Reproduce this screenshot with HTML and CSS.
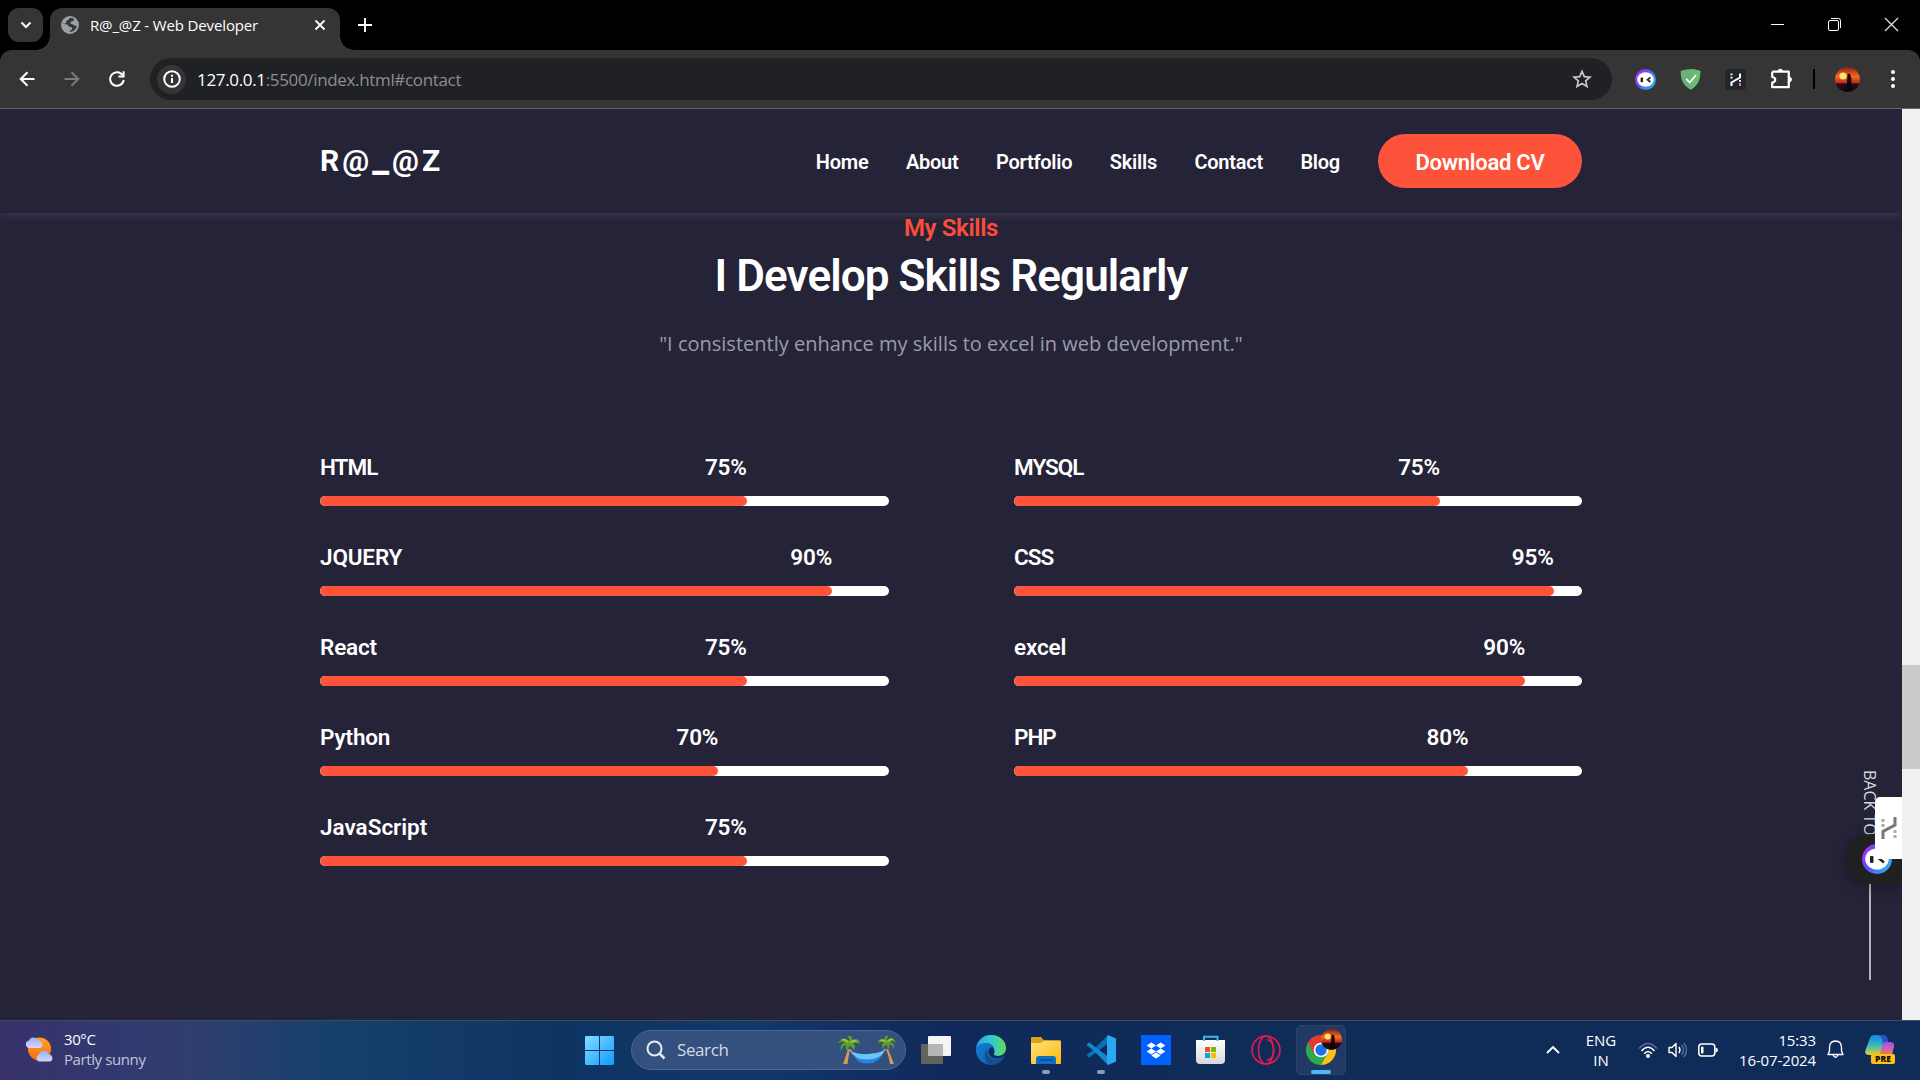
FILE: index.html
```html
<!DOCTYPE html>
<html lang="en">
<head>
<meta charset="utf-8">
<title>R@_@Z - Web Developer</title>
<link rel="stylesheet" href="styles.css">
</head>
<body>
<div class="tabstrip">
  <div class="tab-search"><svg width="12" height="8" viewBox="0 0 12 8"><path d="M1.500 1.500 6 6l4.500-4.500" fill="none" stroke="#fff" stroke-width="2"/></svg></div>
  <div class="tab">
    <svg class="favicon" width="18" height="18" viewBox="0 0 18 18"><circle cx="9" cy="9" r="9" fill="#9aa0a6"/><path d="M9 2c-1 1-1.500 2-3 2.500S6 7 4.500 7.500 2 7 1.800 8c2 .3 4.200 0 5.200 1s.5 2 2 2 2.500.5 2 2-2.500 1.500-2.500 3c4 0 7-3 7.300-6.500-1 .8-2.300.5-3-.5s-2.300-.5-3-1.500.2-2 1.500-2.200 1.700-.8 1.500-2S11 1.800 9 2z" fill="#35363a"/></svg>
    <span class="tab-title">R@_@Z - Web Developer</span>
    <svg class="tab-close" width="12" height="12" viewBox="0 0 12 12"><path d="m1.500 1.500 9 9m0-9-9 9" stroke="#fff" stroke-width="1.800"/></svg>
  </div>
  <svg class="tab-new" width="14" height="14" viewBox="0 0 14 14"><path d="M7 0v14M0 7h14" stroke="#fff" stroke-width="1.900"/></svg>
  <div class="win-controls">
    <svg width="15" height="15" viewBox="0 0 15 15"><path d="M1 7.500h13" stroke="#fff"/></svg>
    <svg width="15" height="15" viewBox="0 0 15 15"><rect x="1.500" y="3.500" width="10" height="10" rx="1.500" fill="none" stroke="#fff"/><path d="M4 1.500h7.500a2 2 0 0 1 2 2V11" fill="none" stroke="#fff"/></svg>
    <svg width="15" height="15" viewBox="0 0 15 15"><path d="m1 1 13 13M14 1 1 14" stroke="#e6e6e6" stroke-width="1.200"/></svg>
  </div>
</div>
<div class="toolbar">
  <div class="nav-btn"><svg width="16" height="16" viewBox="0 0 16 16"><path d="M15.500 8H2M8.500 1.200 1.700 8l6.800 6.800" fill="none" stroke="#fff" stroke-width="2"/></svg></div>
  <div class="nav-btn"><svg width="16" height="16" viewBox="0 0 16 16"><path d="M.5 8H14M7.500 1.200 14.300 8l-6.800 6.800" fill="none" stroke="#7b7b7b" stroke-width="2"/></svg></div>
  <div class="nav-btn"><svg width="16" height="16" viewBox="0 0 16 16"><path d="M13.600 4.200A6.800 6.800 0 1 0 14.700 9" fill="none" stroke="#fff" stroke-width="2"/><path d="M15.600.3v6.200H9.400V4.600h4.200V.3z" fill="#fff"/></svg></div>
  <div class="omnibox">
    <span class="info"><svg width="18" height="18" viewBox="0 0 18 18"><circle cx="9" cy="9" r="7.800" fill="none" stroke="#fff" stroke-width="2"/><path d="M9 8v5M9 4.800v1.900" stroke="#fff" stroke-width="2"/></svg></span>
    <span class="url"><b>127.0.0.1</b>:5500/index.html#contact</span>
    <svg class="star" width="20" height="20" viewBox="0 0 20 20"><path d="m10 2.300 2.300 5.300 5.700.5-4.300 3.800 1.300 5.600-5-3-5 3 1.300-5.600L2 8.100l5.700-.5z" fill="none" stroke="#c7c7c7" stroke-width="1.700"/></svg>
  </div>
  <div class="extensions">
    <span class="ext"><svg width="21" height="21" viewBox="0 0 30 30"><use href="#bot"/></svg></span>
    <span class="ext"><svg width="21" height="21" viewBox="0 0 21 21"><path d="M10.500.3c3.500 0 7 .5 9.800 1.700 0 6.500-.8 13.500-9.800 18.700C1.500 15.500.7 8.500.7 2 3.500.8 7 .3 10.500.3z" fill="#67b279"/><path d="M10.500.3c3.500 0 7 .5 9.800 1.700 0 6.500-.8 13.500-9.800 18.700z" fill="#68bc71"/><path d="m6.200 9.800 3.500 3.700 6.500-7.500" fill="none" stroke="#fff" stroke-width="1.800"/></svg></span>
    <span class="ext"><svg width="21" height="21" viewBox="0 0 21 21"><rect width="21" height="21" rx="3.500" fill="#20262b"/><path d="M6.500 17v-3.500l8.500-5V4.500" fill="none" stroke="#fff" stroke-width="2"/><path d="M6.500 4.500v6M15 11v3" stroke="#fff" stroke-width="2" stroke-dasharray="1.800 1.500"/><path d="M15 14v3" stroke="#f06a9b" stroke-width="2"/></svg></span>
    <span class="ext"><svg width="22" height="22" viewBox="0 0 22 22"><path d="M2.200 3.700h16.600v5.500M18.800 13.500v5.700H2.200v-4.700c4-.7 4-5 0-5.500V3.700" fill="none" stroke="#fff" stroke-width="2.200" stroke-linejoin="round"/><path d="M18.800 8v7" stroke="#fff" stroke-width="2.200"/><path d="M8 3.500a2.300 2.300 0 0 1 4.600 0zM19.200 9.200a2.300 2.300 0 0 1 0 4.600z" fill="#fff" stroke="#fff"/></svg></span>
    <i class="divider"></i>
    <span class="ext"><svg width="25" height="25" viewBox="0 0 25 25"><use href="#sunset"/></svg></span>
    <span class="ext"><svg width="6" height="20" viewBox="0 0 6 20"><g fill="#fff"><circle cx="3" cy="3" r="2"/><circle cx="3" cy="10" r="2"/><circle cx="3" cy="17" r="2"/></g></svg></span>
  </div>
</div>

<div class="viewport">
  <div class="page">
    <header class="site-header">
      <div class="container header-row">
        <span class="logo">R@<span class="dash">_</span>@Z</span>
        <nav class="menu">
          <a>Home</a><a>About</a><a>Portfolio</a><a>Skills</a><a>Contact</a><a>Blog</a>
        </nav>
        <a class="cv-button">Download CV</a>
      </div>
    </header>
    <main class="skills">
      <p class="eyebrow">My Skills</p>
      <h1 class="title">I Develop Skills Regularly</h1>
      <p class="lead">"I consistently enhance my skills to excel in web development."</p>
      <div class="container skill-columns">
        <div class="skill-column">
          <div class="skill"><div class="skill-head" style="width:75%"><span class="caps">HTML</span><span>75%</span></div><div class="bar"><i style="width:75%"></i></div></div>
          <div class="skill"><div class="skill-head" style="width:90%"><span>JQUERY</span><span>90%</span></div><div class="bar"><i style="width:90%"></i></div></div>
          <div class="skill"><div class="skill-head" style="width:75%"><span>React</span><span>75%</span></div><div class="bar"><i style="width:75%"></i></div></div>
          <div class="skill"><div class="skill-head" style="width:70%"><span>Python</span><span>70%</span></div><div class="bar"><i style="width:70%"></i></div></div>
          <div class="skill"><div class="skill-head" style="width:75%"><span class="wide">JavaScript</span><span>75%</span></div><div class="bar"><i style="width:75%"></i></div></div>
        </div>
        <div class="skill-column narrow">
          <div class="skill"><div class="skill-head" style="width:75%"><span class="caps">MYSQL</span><span>75%</span></div><div class="bar"><i style="width:75%"></i></div></div>
          <div class="skill"><div class="skill-head" style="width:95%"><span class="caps">CSS</span><span>95%</span></div><div class="bar"><i style="width:95%"></i></div></div>
          <div class="skill"><div class="skill-head" style="width:90%"><span>excel</span><span>90%</span></div><div class="bar"><i style="width:90%"></i></div></div>
          <div class="skill"><div class="skill-head" style="width:80%"><span class="caps">PHP</span><span>80%</span></div><div class="bar"><i style="width:80%"></i></div></div>
        </div>
      </div>
    </main>
    <div class="back-top"><span>BACK TO TOP</span><i></i></div>
    <div class="bot-pill"><svg width="30" height="30" viewBox="0 0 30 30"><use href="#bot"/></svg></div>
    <div class="side-widget"><svg width="16" height="22" viewBox="0 0 16 22"><path d="M2 22v-7.500L14 8V0" fill="none" stroke="#777" stroke-width="3"/><path d="M2 2v9M14 13v9" stroke="#aaa" stroke-width="3" stroke-dasharray="3 2"/></svg></div>
  </div>
  <div class="scrollbar"><i></i></div>
</div>

<div class="taskbar">
  <div class="weather">
    <svg width="28" height="26" viewBox="0 0 28 26"><defs><linearGradient id="sun" x2="0" y2="1"><stop stop-color="#ffa51f"/><stop offset="1" stop-color="#f8691a"/></linearGradient><linearGradient id="cloud" x2="0" y2="1"><stop stop-color="#93b4f5"/><stop offset="1" stop-color="#d9d3fb"/></linearGradient></defs><circle cx="14.500" cy="13" r="11.500" fill="url(#sun)"/><path d="M4 12a3.800 3.800 0 0 1 0-7.500 4.500 4.500 0 0 1 8.500 0c1 0 2 0 3 .8 3.500 2 2 6.700-1 6.700z" fill="url(#cloud)"/><path d="M14 25.500a3.700 3.700 0 0 1 0-7 5 5 0 0 1 9.500-.5c5 .5 5.200 7.500 1 7.500z" fill="url(#cloud)"/></svg>
    <div class="weather-text"><span>30°C</span><span class="dim">Partly sunny</span></div>
  </div>
  <div class="task-icons">
    <svg class="start" width="29" height="29" viewBox="0 0 29 29"><defs><linearGradient id="win" gradientUnits="userSpaceOnUse" x1="0" y1="0" x2="29" y2="29"><stop stop-color="#84dcff"/><stop offset="1" stop-color="#0d9bff"/></linearGradient></defs><path d="M1 0h13v14H0V1zM15 0h13l1 1v13H15zM0 15h14v14H1l-1-1zM15 15h14v13l-1 1H15z" fill="url(#win)"/></svg>
    <div class="search">
      <svg width="20" height="20" viewBox="0 0 20 20"><circle cx="8.500" cy="8.500" r="7" fill="none" stroke="#e8eaf0" stroke-width="2"/><path d="m13.500 13.500 5 5" stroke="#e8eaf0" stroke-width="2.500"/></svg>
      <span>Search</span>
      <svg class="palms" width="58" height="30" viewBox="0 0 58 30"><path d="M14 17q15 5 32-1-4 12-16 12.500T14 17z" fill="#2186ea"/><path d="M14 17q15 5 32-1-3 8-16 8.500T14 17z" fill="#6cc4f8"/><path d="m12 14 5 6M12 15l3 5M48 14l-5 6M47 14l-6 5" stroke="#a9bfd4" stroke-width=".8"/><path d="M5 29q3-8 5-15l2 .5Q10.500 22 9.500 29z" fill="#d99655"/><path d="M56 29q-3-8-6-15l-2 .5q3 7 4 14.500z" fill="#d99655"/><g id="palm"><path d="M11 6Q5 0 0 8q5-2 7-.5Q1 9 3 16q1-5 5-6-1 4 2 7 .5-4 1-6 4 1 5 5 2-6-1-8 4-1 7 1-1-7-8-4Q15 0 9 1q3 2 2 5z" fill="#5c9f27"/><path d="M11 7Q7 2 3 5q4 0 7 3zM12 7q4-4 8 0-4-1-8 1z" fill="#a4cf3b"/></g><g transform="matrix(-.82 0 0 .9 58 0)"><use href="#palm"/></g></svg>
    </div>
    <div class="app"><svg width="30" height="30" viewBox="0 0 30 30"><rect y="9" width="22" height="20" rx="1" fill="#62625f"/><rect x="7" y="1" width="23" height="20" rx="1" fill="#f4f4f4"/><path d="M7 9h15v12H7z" fill="#b5b5b5"/></svg></div>
    <div class="app"><svg width="30" height="30" viewBox="0 0 30 30"><defs><linearGradient id="e1" x1="0" x2="1"><stop stop-color="#25a9e5"/><stop offset=".55" stop-color="#35c8cf"/><stop offset="1" stop-color="#63dd4e"/></linearGradient><linearGradient id="e2" x2="1" y2="1"><stop stop-color="#1583dd"/><stop offset="1" stop-color="#0a5aa8"/></linearGradient></defs><circle cx="15" cy="15" r="15" fill="url(#e2)"/><path d="M0 14C1 6 7 0 15 0c9 0 15 6 15 13 0 5-4 8-8 8-3 0-5-1-4-2.500C20 13 16 8 10 8 5 8 1 10 0 14z" fill="url(#e1)"/><path d="M12 13c-3 9 5 15 16 9-3 5-7 8-12 8-7-1-10-11-4-17z" fill="#154d91"/><path d="M16 12c-3 1-4 4-3 7s5 5 10 4c3-.5 5-1.500 7-3v-4c-2 4-5 5-8 5-3 0-5-1-4-2.500 1-2 0-5-2-6.500z" fill="#0f2c58"/></svg></div>
    <div class="app running"><svg width="30" height="30" viewBox="0 0 30 30"><defs><linearGradient id="fold" x2="1" y2="1"><stop stop-color="#ffe07a"/><stop offset="1" stop-color="#ffb911"/></linearGradient></defs><path d="M0 3q0-1 1-1h9l3 3.500h16V12H0z" fill="#dfa01a"/><path d="M0 8h10l3-2.500h16q1 0 1 1V28q0 1-1 1H1q-1 0-1-1z" fill="url(#fold)"/><path d="M5 29v-5q0-3 3-3h14q3 0 3 3v5z" fill="#0f70c0"/><path d="M9 25h12" stroke="#064a8c" stroke-width="1.500" stroke-linecap="round"/></svg></div>
    <div class="app running"><svg width="30" height="30" viewBox="0 0 30 30"><path d="M22 0 7.500 14.500 3 18 .5 20l2 2.500L4 22 22 8.500z" fill="#0a6fb5"/><path d="M22 30 7.500 15.500 3 12 .5 10l2-2.500L4 8l18 13.500z" fill="#1487cf"/><path d="M22 0q-1 1-1 3v24q0 2 1 3l8-3.500v-23z" fill="#29a9f2"/></svg></div>
    <div class="app"><svg width="30" height="30" viewBox="0 0 30 30"><path d="M0 0h30v30H0z" fill="#0061fe"/><path d="m10.300 7.500 4.700 3-4.700 3-4.700-3zM19.700 7.500l4.700 3-4.700 3-4.700-3zM10.300 13.500l4.700 3-4.700 3-4.700-3zM19.700 13.500l4.700 3-4.700 3-4.700-3zM15 17.500l4.700 3-4.700 3-4.700-3z" fill="#fff"/></svg></div>
    <div class="app"><svg width="30" height="30" viewBox="0 0 30 30"><defs><linearGradient id="bag" x2="0" y2="1"><stop stop-color="#fff"/><stop offset="1" stop-color="#d8d8d8"/></linearGradient></defs><path d="M0 5h29v20q0 4-4 4H4q-4 0-4-4z" fill="url(#bag)"/><path d="M8 6V1.800h13.500V6" fill="none" stroke="#35b7f1" stroke-width="2"/><path d="M9 12h5v5H9z" fill="#f25022"/><path d="M15 12h5v5h-5z" fill="#7fba00"/><path d="M9 18h5v5H9z" fill="#00a4ef"/><path d="M15 18h5v5h-5z" fill="#ffb900"/></svg></div>
    <div class="app"><svg width="30" height="30" viewBox="0 0 30 30"><g fill="none" stroke="#e51a4b" stroke-width="1.600"><circle cx="15" cy="15" r="14"/><ellipse cx="15" cy="15" rx="7.500" ry="14"/><path d="M16 4.500c9 2 9 19 0 21"/></g></svg></div>
    <div class="app active"><svg width="30" height="30" viewBox="0 0 30 30"><path d="M15 15 28 7.500A15 15 0 0 1 15 30z" fill="#fbc116"/><path d="M15 0 2 7.500A15 15 0 0 0 15 30l6.500-11.500z" fill="#2da94f"/><path d="M15 15 8 18.500 2 7.500A15 15 0 0 1 28 7.500H15z" fill="#e33b2e"/><circle cx="15" cy="15" r="7.300" fill="#fff"/><circle cx="15" cy="15" r="5.700" fill="#1a73e8"/></svg><svg class="badge" width="21" height="21" viewBox="0 0 25 25"><use href="#sunset"/></svg></div>
  </div>
  <div class="tray">
    <svg class="caret" width="14" height="9" viewBox="0 0 14 9"><path d="m1 8 6-6 6 6" fill="none" stroke="#fff" stroke-width="1.900"/></svg>
    <div class="lang"><span>ENG</span><span>IN</span></div>
    <div class="status">
    <svg width="20" height="16" viewBox="0 0 20 16"><g fill="none" stroke="#fff" stroke-width="1.600"><path d="M1 6.500q9-10 18 0" stroke="#56709a"/><path d="M3.500 9q6.500-7.500 13 0M6.200 11.800q3.800-4.500 7.600 0"/></g><circle cx="10" cy="14" r="2" fill="#fff"/></svg>
    <svg width="20" height="16" viewBox="0 0 20 16"><path d="M1 5.500h3L8 1.500v13l-4-4H1z" fill="none" stroke="#fff" stroke-width="1.400" stroke-linejoin="round"/><path d="M11 5q2 3 0 6" fill="none" stroke="#fff" stroke-width="1.400"/><path d="M13.500 3q4 5 0 10M16 1q5 7 0 14" fill="none" stroke="#56709a" stroke-width="1.400"/></svg>
    <svg width="20" height="14" viewBox="0 0 20 14"><rect x=".8" y="1" width="16" height="12" rx="3" fill="none" stroke="#fff" stroke-width="1.500"/><path d="M17.500 4.500q2.500.5 2.500 2.500t-2.500 2.500z" fill="#fff"/><rect x="3" y="3.500" width="2.500" height="7" rx="1" fill="#fff"/></svg>
    </div>
    <div class="clock"><span>15:33</span><span>16-07-2024</span></div>
    <svg class="bell" width="17" height="19" viewBox="0 0 17 19"><path d="M8.500 1q6 .2 6 6.500v3.500l1.500 3.500H1L2.500 11V7.500q0-6.300 6-6.500zM6 15q2.500 4.500 5 0" fill="none" stroke="#fff" stroke-width="1.400" stroke-linejoin="round"/></svg>
    <div class="copilot"><svg width="30" height="29" viewBox="0 0 30 29"><defs><linearGradient id="c1" x2="0" y2="1"><stop stop-color="#1f7fe6"/><stop offset=".45" stop-color="#2ab6c4"/><stop offset="1" stop-color="#e8cf2b"/></linearGradient><linearGradient id="c2" x2="0" y2="1"><stop stop-color="#a24cf0"/><stop offset="1" stop-color="#f57a62"/></linearGradient></defs><path d="M9 0h9q3 0 4 3l1 4q-4 0-5 4l-2 6q-1 3-4 3H4q-5 0-3.500-5L5 3q1-3 4-3z" fill="url(#c1)"/><path d="M18 0q3 0 4 3l1 4q-4 0-5 4l-1-7q-1-3-4-4z" fill="#2155c9"/><path d="M20 7h5q5 0 4 5l-2 8H13q2-1 2.500-3l2-7q1-3 2.500-3z" fill="url(#c2)"/></svg><span>PRE</span></div>
  </div>
</div>
<svg class="symbols" width="0" height="0">
  <defs>
    <linearGradient id="ring" x1="0" y1=".2" x2="1" y2=".8"><stop stop-color="#b02cf0"/><stop offset=".4" stop-color="#5b50ff"/><stop offset="1" stop-color="#23b8e8"/></linearGradient>
    <linearGradient id="sky" x2="0" y2="1"><stop stop-color="#8a1d1c"/><stop offset=".38" stop-color="#fb6a1c"/><stop offset=".62" stop-color="#c22c1a"/><stop offset=".68" stop-color="#2a0c18"/><stop offset="1" stop-color="#0c0612"/></linearGradient>
    <g id="bot"><circle cx="15" cy="15" r="15" fill="url(#ring)"/><ellipse cx="15" cy="15" rx="11.800" ry="10.500" fill="#fff"/><rect x="8" y="12" width="3.500" height="7" rx="1" fill="#222"/><path d="m22 12-4 3.300 4 3.200" fill="none" stroke="#222" stroke-width="2.500"/></g>
    <g id="sunset"><circle cx="12.500" cy="12.500" r="12.500" fill="url(#sky)"/><circle cx="8" cy="9" r="3.600" fill="#ffe66b"/><path d="M12.500 8q1.500-3 3 0l1 5-1 11h-5l1.500-8z" fill="#0c0509"/></g>
  </defs>
</svg>
</body>
</html>
```
FILE: styles.css
```css
* { box-sizing: border-box; }
body {
  margin: 0;
  width: 1920px;
  height: 1080px;
  overflow: hidden;
  display: flex;
  flex-direction: column;
  background: #000;
  color: #fff;
  font-family: "Open Sans", "Noto Sans", sans-serif;
}
svg { display: block; flex: none; }
.symbols { position: absolute; }

/* Browser tab strip */
.tabstrip { height: 50px; display: flex; align-items: flex-start; padding-left: 8px; flex: none; }
.tab-search { width: 35px; height: 34px; margin: 8px 7px 0 0; border-radius: 11px; background: #353535; display: grid; place-items: center; }
.tab { position: relative; width: 290px; height: 42px; margin-top: 8px; padding: 0 14px 8px 11px; border-radius: 12px 12px 0 0; background: #353535; display: flex; align-items: center; }
.tab::before, .tab::after { content: ""; position: absolute; bottom: 0; width: 14px; height: 14px; }
.tab::before { left: -14px; background: radial-gradient(circle at 0 0, transparent 13.5px, #353535 14px); }
.tab::after { right: -14px; background: radial-gradient(circle at 100% 0, transparent 13.5px, #353535 14px); }
.tab-title { margin-left: 11px; font-size: 15px; letter-spacing: -.14px; white-space: nowrap; }
.tab-close { margin-left: auto; }
.tab-new { margin: 18px 0 0 18px; }
.win-controls { margin: 17px 21px 0 auto; display: flex; gap: 42px; }

/* Browser toolbar */
.toolbar { height: 59px; flex: none; display: flex; align-items: center; padding: 0 5px; background: #353535; border-bottom: 1px solid #66655f; border-radius: 12px 12px 0 0; }
.nav-btn { width: 45px; padding-right: 1px; display: flex; justify-content: center; }
.omnibox { width: 1462px; height: 42px; margin-left: 10px; padding: 0 20px 0 7px; border-radius: 21px; background: #202124; display: flex; align-items: center; }
.info { width: 29px; height: 29px; border-radius: 50%; background: #353535; display: grid; place-items: center; }
.url { margin-left: 11px; font-size: 17px; letter-spacing: -.34px; color: #8d8f92; white-space: nowrap; }
.url b { font-weight: 400; color: #fff; }
.star { margin-left: auto; }
.extensions { display: flex; align-items: center; margin-left: 11px; }
.ext { width: 45px; display: flex; justify-content: center; }
.divider { width: 2px; height: 20px; margin: 0 10px; background: #000; }

/* Web page */
.viewport { height: 911px; flex: none; display: flex; }
.page { position: relative; width: 1902px; overflow: hidden; background: #252338; font-family: Roboto, sans-serif; }
.scrollbar { width: 18px; background: #f1f1f1; padding-top: 556px; }
.scrollbar i { display: block; height: 104px; background: #cacaca; }
.container { width: 1262px; margin: 0 auto; }
.site-header { height: 104px; background: #252338; box-shadow: 0 2px 10px rgba(110, 108, 140, .3); }
.header-row { height: 104px; display: flex; align-items: center; }
.logo { font-size: 30px; font-weight: 700; line-height: 36px; letter-spacing: 3px; }
.dash { font-size: 38px; line-height: 0; }
.menu { margin-left: auto; display: flex; gap: 37.5px; font-size: 20px; font-weight: 600; line-height: 26px; letter-spacing: -.25px; padding-top: 2px; }
.cv-button { width: 204px; height: 54px; margin-left: 38px; padding-top: 2px; border-radius: 27px; background: #fd533b; display: grid; place-items: center; font-size: 22px; font-weight: 600; letter-spacing: -.25px; }
.skills { text-align: center; }
.eyebrow { margin: 0; color: #fd4d3a; font-size: 24px; font-weight: 600; line-height: 30px; letter-spacing: -.35px; }
.title { margin: 8px 0 0; font-size: 44px; font-weight: 600; line-height: 50px; letter-spacing: -.9px; }
.lead { margin: 28px 0 0; font: 20px/30px "Open Sans", sans-serif; color: #9c9ba9; }
.skill-columns { display: flex; justify-content: space-between; text-align: left; padding-top: 93px; }
.skill-column { width: 569px; display: flex; flex-direction: column; gap: 36px; }
.narrow { width: 568px; }
.skill { height: 54px; font-size: 22.5px; font-weight: 600; line-height: 30px; letter-spacing: -.15px; }
.skill-head { display: flex; justify-content: space-between; height: 44px; }
.caps { letter-spacing: -1px; }
.wide { letter-spacing: 0; }
.bar { height: 10px; border-radius: 5px; background: #fff; overflow: hidden; }
.bar i { display: block; height: 10px; border-radius: 5px; background: #fd533b; }
.back-top { position: absolute; left: 1858px; top: 661px; display: flex; flex-direction: column; align-items: center; font: 500 16px/24px "Open Sans", sans-serif; color: #d8d8de; }
.back-top span { writing-mode: vertical-rl; height: 110px; }
.back-top i { width: 1.5px; height: 100px; background: #b4b4bd; }
.bot-pill { position: absolute; right: 0; top: 725px; width: 56px; height: 50px; padding: 10px 0 0 16px; border-radius: 25px 0 0 25px; background: #202020; box-shadow: 0 2px 14px rgba(0, 0, 0, .35); }
.side-widget { position: absolute; right: 0; top: 688px; width: 27px; height: 62px; border-radius: 5px 0 0 0; background: #fff; display: grid; place-items: center; }

/* Taskbar */
.taskbar { height: 60px; flex: none; display: flex; border-top: 1px solid #3d4a68; background: linear-gradient(90deg, #37316b 0, #333870 100px, #2f3e70 200px, #17406d 320px, #0e3462 560px, #12376a 760px, #10295a 950px, #0f2c57 1300px, #0f2b58 100%); font-size: 15px; line-height: 20px; }
.taskbar span { white-space: nowrap; }
.weather { width: 585px; display: flex; padding: 15px 0 0 25px; }
.weather-text { display: flex; flex-direction: column; margin: -7px 0 0 11px; letter-spacing: -.4px; }
.dim { color: #c3c6d8; }
.task-icons { display: flex; width: 961px; align-items: center; padding-bottom: 1px; }
.search { width: 275px; height: 40px; margin: 0 5px 0 17px; padding: 0 9px 0 14px; border: 1px solid #4d6590; border-radius: 20px; background: #33507e; display: flex; align-items: center; font-size: 17px; letter-spacing: -.4px; color: #d3dae6; }
.search span { margin-left: 11px; }
.palms { margin-left: auto; }
.app { position: relative; width: 50px; height: 50px; margin-right: 5px; display: grid; place-items: center; border-radius: 5px; }
.running::after, .active::after { content: ""; position: absolute; bottom: 1px; left: 21px; width: 8px; height: 4px; border-radius: 2px; background: #8f9bb3; }
.active { background: #213a64; border: 1px solid #2d456d; }
.active::after { left: 14px; bottom: 0; width: 20px; background: #4cb8ff; }
.badge { position: absolute; right: 3px; top: 3px; }
.tray { display: flex; align-items: center; padding-bottom: 2px; }
.lang { width: 50px; margin-left: 16px; display: flex; flex-direction: column; align-items: center; }
.status { display: flex; align-items: center; gap: 10px; margin-left: 12px; }
.clock { width: 98px; display: flex; flex-direction: column; align-items: flex-end; letter-spacing: -.13px; }
.bell { margin-left: 11px; }
.copilot { position: relative; margin-left: 21px; }
.copilot span { position: absolute; left: 6px; top: 19px; width: 24px; height: 10px; border-radius: 2px; background: #ffc20e; color: #111; font-size: 8.5px; font-weight: 800; line-height: 10px; text-align: center; }
```
